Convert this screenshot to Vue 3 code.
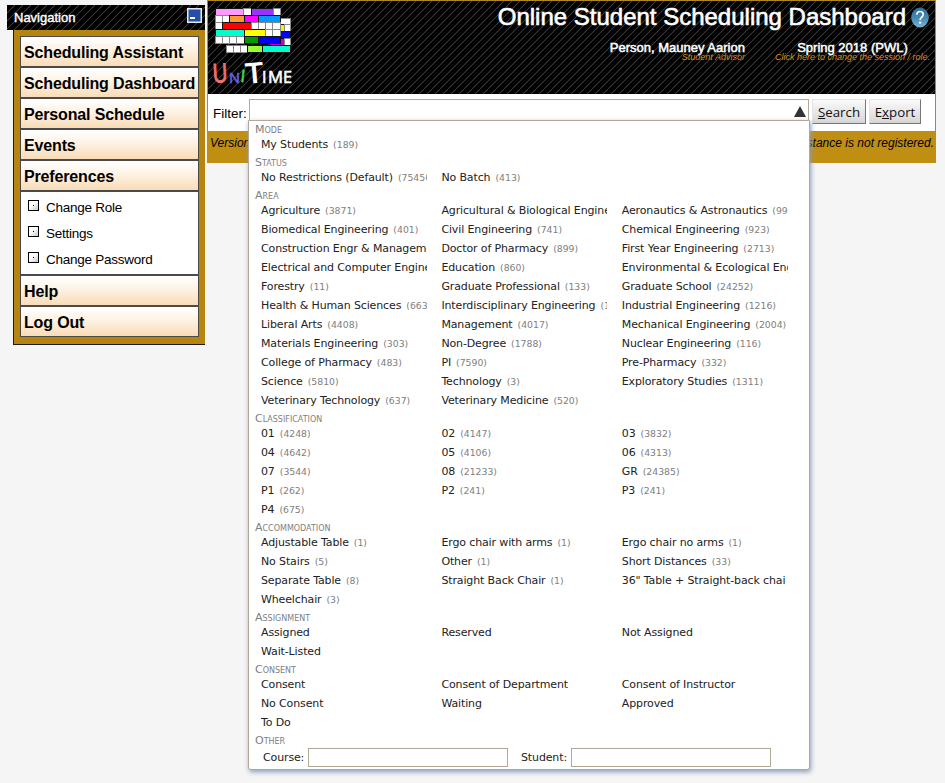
<script setup>
const menuTop = ['Scheduling Assistant', 'Scheduling Dashboard', 'Personal Schedule', 'Events', 'Preferences']
const subMenu = ['Change Role', 'Settings', 'Change Password']
const menuBottom = ['Help', 'Log Out']

const sections = [
  { name: 'Mode', items: [['My Students', 189]] },
  { name: 'Status', items: [['No Restrictions (Default)', 75450], ['No Batch', 413]] },
  {
    name: 'Area',
    items: [
      ['Agriculture', 3871], ['Agricultural & Biological Engine'], ['Aeronautics & Astronautics', 990],
      ['Biomedical Engineering', 401], ['Civil Engineering', 741], ['Chemical Engineering', 923],
      ['Construction Engr & Manageme'], ['Doctor of Pharmacy', 899], ['First Year Engineering', 2713],
      ['Electrical and Computer Engine'], ['Education', 860], ['Environmental & Ecological Eng'],
      ['Forestry', 11], ['Graduate Professional', 133], ['Graduate School', 24252],
      ['Health & Human Sciences', 6634], ['Interdisciplinary Engineering', 1], ['Industrial Engineering', 1216],
      ['Liberal Arts', 4408], ['Management', 4017], ['Mechanical Engineering', 2004],
      ['Materials Engineering', 303], ['Non-Degree', 1788], ['Nuclear Engineering', 116],
      ['College of Pharmacy', 483], ['PI', 7590], ['Pre-Pharmacy', 332],
      ['Science', 5810], ['Technology', 3], ['Exploratory Studies', 1311],
      ['Veterinary Technology', 637], ['Veterinary Medicine', 520]
    ]
  },
  {
    name: 'Classification',
    items: [
      ['01', 4248], ['02', 4147], ['03', 3832], ['04', 4642], ['05', 4106], ['06', 4313],
      ['07', 3544], ['08', 21233], ['GR', 24385], ['P1', 262], ['P2', 241], ['P3', 241], ['P4', 675]
    ]
  },
  {
    name: 'Accommodation',
    items: [
      ['Adjustable Table', 1], ['Ergo chair with arms', 1], ['Ergo chair no arms', 1],
      ['No Stairs', 5], ['Other', 1], ['Short Distances', 33],
      ['Separate Table', 8], ['Straight Back Chair', 1], ['36" Table + Straight-back chai'],
      ['Wheelchair', 3]
    ]
  },
  { name: 'Assignment', items: [['Assigned'], ['Reserved'], ['Not Assigned'], ['Wait-Listed']] },
  {
    name: 'Consent',
    items: [['Consent'], ['Consent of Department'], ['Consent of Instructor'], ['No Consent'], ['Waiting'], ['Approved'], ['To Do']]
  }
]

// Timetable blocks of the logo: x, y, width, height, colour
const blocks = [
  [0, 0, 28, 7, '#ff99ff'], [28, 0, 8, 7, '#fff'], [36, 0, 22, 7, '#9933ff'], [58, 0, 7, 7, '#fff'],
  [65, 10, 10, 6, '#fff'], [65, 16, 4, 7, '#ffee00'], [69, 16, 6, 7, '#fff'], [65, 23, 10, 7, '#0000ff'],
  [54, 30, 15, 7, '#cc00cc'], [69, 30, 6, 7, '#fff'],
  [0, 7, 7, 7, '#fff'], [7, 7, 7, 7, '#fff'], [14, 7, 15, 7, '#ff9933'], [29, 7, 14, 7, '#ff00ff'], [43, 7, 22, 7, '#0099ff'],
  [0, 14, 7, 7, '#fff'], [7, 14, 29, 7, '#ff0000'], [36, 14, 7, 7, '#fff'], [43, 14, 7, 7, '#fff'], [50, 14, 7, 7, '#fff'], [57, 14, 8, 7, '#fff'],
  [0, 21, 29, 7, '#00ffcc'], [29, 21, 21, 7, '#ffff00'], [50, 21, 7, 7, '#fff'], [57, 21, 8, 7, '#fff'],
  [0, 28, 7, 7, '#fff'], [7, 28, 7, 7, '#fff'], [14, 28, 7, 7, '#fff'], [21, 28, 8, 7, '#fff'], [29, 28, 14, 7, '#009900'], [43, 28, 22, 7, '#0000ff'],
  [11, 37, 7, 7, '#fff'], [18, 37, 7, 7, '#fff'], [25, 37, 7, 7, '#fff'], [32, 37, 15, 7, '#99ff33'], [47, 37, 28, 7, '#00ffcc']
]
</script>

<template>
  <div class="page">
    <aside class="sidebar">
      <div class="nav-title stripes">
        <span>Navigation</span>
        <svg class="minimize" width="15" height="15" viewBox="0 0 15 15">
          <rect x="0.75" y="0.75" width="13.5" height="13.5" fill="#2450a8" stroke="#e4e8f0" stroke-width="1.5" />
          <rect x="3" y="9" width="5" height="2" fill="#fff" />
        </svg>
      </div>
      <nav class="nav-box">
        <a v-for="m in menuTop" :key="m" class="menu-item"><span>{{ m }}</span></a>
        <div class="submenu">
          <a v-for="s in subMenu" :key="s" class="sub-item">
            <svg width="11" height="11" viewBox="0 0 11 11">
              <defs>
                <linearGradient id="leaf" x1="0" y1="0" x2="1" y2="1">
                  <stop offset="0.4" stop-color="#fff" /><stop offset="1" stop-color="#c4c4c4" />
                </linearGradient>
              </defs>
              <rect x="0.5" y="0.5" width="10" height="10" fill="url(#leaf)" stroke="#000" />
              <rect x="5" y="5" width="1" height="1" fill="#000" />
            </svg>
            <span>{{ s }}</span>
          </a>
        </div>
        <a v-for="m in menuBottom" :key="m" class="menu-item"><span>{{ m }}</span></a>
      </nav>
    </aside>

    <main class="main">
      <header class="header stripes">
        <svg class="logo" width="84" height="82" viewBox="0 0 84 82">
          <g transform="translate(7.5 7.5)" stroke-width="1">
            <rect v-for="(b, i) in blocks" :key="i" :x="b[0]" :y="b[1]" :width="b[2]" :height="b[3]" :fill="b[4]" :stroke="b[4] === '#fff' ? '#888' : '#111'" />
          </g>
          <g class="logo-text">
            <text class="big" x="5" y="81.5" font-size="26" textLength="15" lengthAdjust="spacingAndGlyphs" fill="#f0706a" stroke="#f0706a" transform="rotate(-3 12 80)">U</text>
            <text x="21" y="82" font-size="15" textLength="11" lengthAdjust="spacingAndGlyphs" fill="#6464e0" stroke="#6464e0">N</text>
            <text x="32.5" y="81" font-size="17" fill="#44dd44" stroke="#44dd44" transform="rotate(6 35 76)">I</text>
            <text class="big" x="38" y="81.5" font-size="27" textLength="17" lengthAdjust="spacingAndGlyphs" fill="#fff" stroke="#fff" transform="rotate(-5 46 72)">T</text>
            <text x="54" y="81.5" font-size="16" fill="#fff" stroke="#fff">I</text>
            <text x="60" y="81.5" font-size="16" textLength="15" lengthAdjust="spacingAndGlyphs" fill="#fff" stroke="#fff">M</text>
            <text x="75" y="81.5" font-size="16" textLength="9" lengthAdjust="spacingAndGlyphs" fill="#fff" stroke="#fff">E</text>
          </g>
        </svg>
        <div class="head-right">
          <div class="title-row">
            <h1>Online Student Scheduling Dashboard</h1>
            <svg class="help" width="18" height="21" viewBox="0 0 18 21">
              <defs>
                <linearGradient id="ball" x1="0" y1="0" x2="0" y2="1">
                  <stop offset="0" stop-color="#2f6f98" /><stop offset="0.5" stop-color="#4388b4" /><stop offset="1" stop-color="#79b5d6" />
                </linearGradient>
              </defs>
              <ellipse cx="9" cy="10.5" rx="8.8" ry="10" fill="url(#ball)" />
              <path d="M5.8 7.6C5.9 5.4 7.2 4.5 9 4.5s3.2 1.1 3.2 2.9c0 2.7-3.1 2.6-3.1 5.5" fill="none" stroke="#fff" stroke-width="1.7" />
              <circle cx="9.1" cy="15.6" r="1.2" fill="#fff" />
            </svg>
          </div>
          <div class="info-row">
            <div class="info user"><b>Person, Mauney Aarion</b><i>Student Advisor</i></div>
            <div class="info session"><b>Spring 2018 (PWL)</b><i>Click here to change the session / role.</i></div>
          </div>
        </div>
      </header>

      <div class="filter-row">
        <label>Filter:</label>
        <div class="filter-wrap">
          <div class="filter-box">
            <svg width="12" height="11" viewBox="0 0 12 11"><path d="M6 0L12 11H0z" fill="#333" /></svg>
          </div>
          <div class="popup">
            <section v-for="s in sections" :key="s.name">
              <h2>{{ s.name }}</h2>
              <div class="grid">
                <div v-for="it in s.items" :key="it[0]" class="cell">
                  <span>{{ it[0] }}</span><small v-if="it[1]">({{ it[1] }})</small>
                </div>
              </div>
            </section>
            <section>
              <h2>Other</h2>
              <div class="other">
                <label class="course">Course:</label><input type="text" />
                <label class="student">Student:</label><input type="text" />
              </div>
            </section>
          </div>
        </div>
        <button class="search"><span><u>S</u>earch</span></button>
        <button class="export"><span>E<u>x</u>port</span></button>
      </div>

      <footer class="version">
        <span>Version</span>
        <span class="reg">This instance is not registered.</span>
      </footer>
    </main>
  </div>
</template>

<style>
html, body { background: #f5f5f5; overflow: hidden; }
</style>

<style scoped>
.page {
  display: flex;
  align-items: flex-start;
  width: 945px;
  height: 783px;
  box-sizing: border-box;
  padding-left: 7px;
  font-family: "Liberation Sans", Arial, sans-serif;
  color: #000;
}
.stripes {
  background-color: #000;
  background-image: linear-gradient(135deg, #262626 0, #000 7%, #000 42%, #3a3a3a 50%, #000 58%, #000 93%, #262626 100%);
  background-size: 8px 8px;
}
.sidebar { width: 198px; padding-top: 5px; flex: none; }
.nav-title {
  height: 25px;
  display: flex;
  justify-content: space-between;
  align-items: flex-start;
  color: #fff;
  font-size: 13px;
  line-height: 25px;
  padding: 0 3px 0 7px;
  -webkit-text-stroke: 0.4px #fff;
}
.minimize { margin-top: 3px; }
.nav-box {
  margin-left: 6px;
  height: 315px;
  box-sizing: border-box;
  border-left: 1px solid #1a1a1a;
  border-bottom: 1px solid #1a1a1a;
  background: #b5850f;
  padding: 6px 6px 0;
}
.menu-item {
  display: flex;
  align-items: center;
  height: 31px;
  box-sizing: border-box;
  border: 1px solid #4c4a48;
  background: linear-gradient(#fff, #fef4e8 40%, #f9dcb6);
  padding-left: 3px;
  padding-top: 3px;
  font-weight: bold;
  font-size: 16px;
  letter-spacing: -0.15px;
  white-space: nowrap;
}
.submenu {
  height: 84px;
  box-sizing: border-box;
  border: 1px solid #4c4a48;
  background: #fff;
  padding: 2px 0 0 7px;
}
.sub-item { display: flex; align-items: center; height: 26px; font-size: 13.5px; letter-spacing: -0.26px; gap: 7px; }
.sub-item svg { margin-top: -3px; }

.main {
  margin-left: 2px;
  width: 729px;
  box-sizing: border-box;
  border: 1px solid #b08a20;
  border-bottom: 0;
  background: #fff;
}
.header { height: 93px; display: flex; justify-content: space-between; color: #fff; }
.logo { overflow: visible; }
.logo-text { font-family: "Open Sans", sans-serif; font-weight: 400; stroke-width: 0.6px; }
.logo-text .big { stroke-width: 1.1px; }
.head-right { padding-right: 5px; }
.title-row { display: flex; justify-content: flex-end; height: 36px; gap: 5px; padding-right: 1px; }
h1 {
  margin: 0;
  font-size: 24px;
  line-height: 31px;
  font-weight: normal;
  white-space: nowrap;
  -webkit-text-stroke: 0.6px #fff;
}
.help { margin-top: 6px; }
.info-row { display: flex; justify-content: flex-end; gap: 30px; }
.info { display: flex; flex-direction: column; align-items: center; white-space: nowrap; }
.info.user { align-items: flex-end; }
.info b { font-weight: normal; font-size: 13px; line-height: 22px; height: 15px; -webkit-text-stroke: 0.5px #fff; }
.info i { font-size: 9px; line-height: 10px; color: #dc8a14; }

.filter-row { display: flex; height: 37px; align-items: flex-start; font-size: 13.5px; }
.filter-row > label { width: 41px; box-sizing: border-box; padding-left: 5px; line-height: 40px; white-space: nowrap; }
.filter-wrap { position: relative; width: 560px; padding-top: 5px; }
.filter-box {
  height: 22px;
  box-sizing: border-box;
  border: 1px solid #b3a898;
  display: flex;
  justify-content: flex-end;
  align-items: center;
  padding: 2px 2px 0 0;
}
button {
  margin: 5px 0 0 3px;
  height: 25px;
  box-sizing: border-box;
  padding: 0;
  border: 1px solid #e4e4e4;
  border-right-color: #777;
  border-bottom-color: #777;
  background: linear-gradient(#fafafa, #d6d6d6);
  font-family: "Open Sans", sans-serif;
  font-size: 13.3px;
  line-height: 25px;
  color: #111;
}
.search { width: 54px; }
.export { width: 52px; }

.popup {
  position: absolute;
  left: -1px;
  top: 26px;
  z-index: 2;
  width: 562px;
  height: 650px;
  box-sizing: border-box;
  border: 1px solid #b3a898;
  border-radius: 0 0 3px 3px;
  background: #fff;
  box-shadow: 1px 2px 5px #8a9cbc;
  font-family: "DejaVu Sans", Verdana, sans-serif;
  font-size: 11px;
  letter-spacing: -0.13px;
  color: #222;
}
h2 {
  margin: 0;
  padding-left: 6px;
  height: 14px;
  font-size: 11px;
  line-height: 18px;
  letter-spacing: 0;
  font-weight: normal;
  font-variant: small-caps;
  color: #808080;
}
.grid { display: grid; grid-template-columns: repeat(3, 166px); column-gap: 14.4px; padding-left: 12px; }
.cell { height: 19px; line-height: 20px; overflow: hidden; white-space: nowrap; }
.cell small { font-size: 9.3px; letter-spacing: 0; color: #808080; margin-left: 5px; }
.other { display: flex; align-items: center; height: 23px; }
.other label { box-sizing: border-box; line-height: 20px; padding-top: 1px; }
.other .course { width: 59px; padding-left: 14px; }
.other .student { width: 63px; padding-left: 13px; }
input {
  width: 200px;
  height: 19px;
  box-sizing: border-box;
  margin: 0;
  border: 1px solid #b3a898;
  background: #fff;
}
.version {
  height: 32px;
  margin: 0 -1px;
  box-sizing: border-box;
  background: #c08e10;
  display: flex;
  justify-content: space-between;
  padding: 4px 2px 0 3px;
  font-size: 12px;
  line-height: 17px;
  font-style: italic;
}
</style>
